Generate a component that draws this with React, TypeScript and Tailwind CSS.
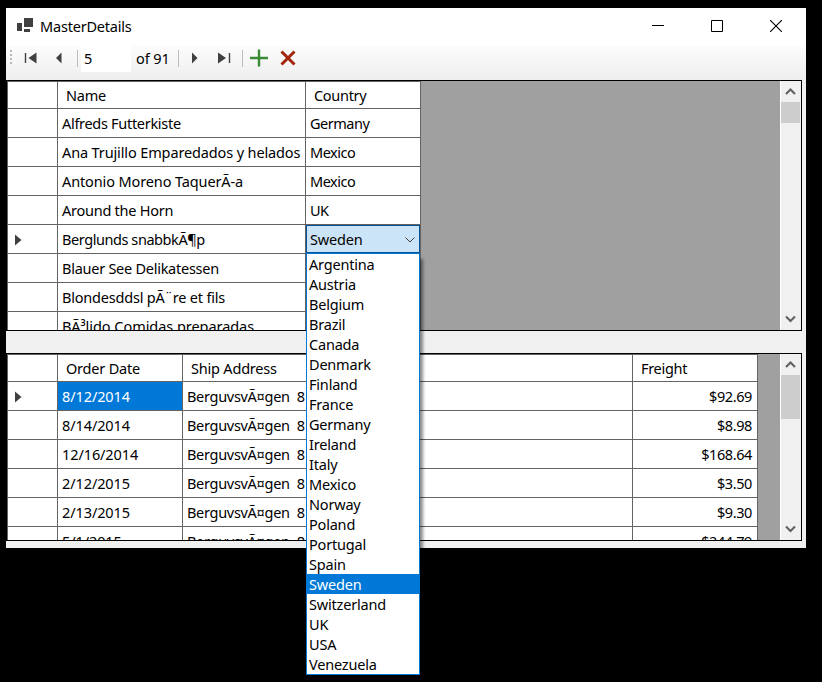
import React from "react";

const customers: [string, string, string][] = [
  ["Alfreds Futterkiste", "Germany", "tracking-[-0.3px]"],
  ["Ana Trujillo Emparedados y helados", "Mexico", "tracking-[-0.13px]"],
  ["Antonio Moreno TaquerÃ-a", "Mexico", "tracking-[-0.12px]"],
  ["Around the Horn", "UK", "tracking-[-0.25px]"],
  ["Berglunds snabbkÃ¶p", "Sweden", "tracking-[-0.43px]"],
  ["Blauer See Delikatessen", "", "tracking-[-0.26px]"],
  ["Blondesddsl pÃ¨re et fils", "", "tracking-[-0.2px]"],
  ["BÃ³lido Comidas preparadas", "", "tracking-[-0.05px]"],
];

const orders: [string, string][] = [
  ["8/12/2014", "$92.69"],
  ["8/14/2014", "$8.98"],
  ["12/16/2014", "$168.64"],
  ["2/12/2015", "$3.50"],
  ["2/13/2015", "$9.30"],
  ["5/1/2015", "$244.79"],
];

const countries = [
  "Argentina", "Austria", "Belgium", "Brazil", "Canada", "Denmark", "Finland",
  "France", "Germany", "Ireland", "Italy", "Mexico", "Norway", "Poland",
  "Portugal", "Spain", "Sweden", "Switzerland", "UK", "USA", "Venezuela",
];

function Chevron({ up = false, className = "" }: { up?: boolean; className?: string }) {
  return (
    <svg width="21" height="20" viewBox="0 0 21 20" className={className}>
      <path d={up ? "M6 13 L10.5 8.5 L15 13" : "M6 6.5 L10.5 11 L15 6.5"} fill="none" stroke="#606060" strokeWidth="2.1" />
    </svg>
  );
}

function ScrollBar({ thumb }: { thumb: string }) {
  return (
    <div className="flex w-[21px] shrink-0 flex-col border-l border-white bg-[#f0f0f0]">
      <Chevron up className="-ml-px shrink-0" />
      <div className={"mt-px w-[19px] shrink-0 bg-[#cdcdcd] " + thumb} />
      <Chevron className="-ml-px mt-auto shrink-0" />
    </div>
  );
}

function RowHead({ current = false }: { current?: boolean }) {
  return (
    <div className="flex w-[50px] shrink-0 items-center border-r border-[#646464] pl-[7px] pt-[2px]">
      {current && (
        <svg width="7" height="12" viewBox="0 0 7 12">
          <path d="M0 0.5 L6.5 6 L0 11.5 Z" fill="#404040" />
        </svg>
      )}
    </div>
  );
}

function Separator() {
  return <div className="h-[17px] w-px bg-[#bdbdbd]" />;
}

function TitleBar() {
  return (
    <div className="flex h-[37px] shrink-0 items-center bg-white pl-[11px]">
      <svg width="17" height="16" viewBox="0 0 17 16" className="mb-[3px]">
        <rect x="7" y="1" width="9" height="9" fill="#404040" />
        <rect x="0" y="6" width="5" height="8" fill="#404040" />
        <rect x="7" y="12" width="6" height="3" fill="#404040" />
      </svg>
      <span className="mb-[2px] ml-[6px] text-[14.5px]">MasterDetails</span>
      <div className="mb-px ml-auto flex items-center gap-[47px] pr-[24px]">
        <svg width="12" height="12" viewBox="0 0 12 12"><path d="M0 5.5 H12" stroke="#000" /></svg>
        <svg width="12" height="12" viewBox="0 0 12 12"><path d="M.5 .5 H11.5 V11.5 H.5 Z" fill="none" stroke="#000" /></svg>
        <svg width="12" height="12" viewBox="0 0 12 12"><path d="M0 0 L12 12 M12 0 L0 12" stroke="#000" strokeWidth="1.1" /></svg>
      </div>
    </div>
  );
}

function ToolBar() {
  return (
    <div className="flex h-[35px] shrink-0 items-start bg-linear-to-b from-[#fdfdfd] to-[#eeeeee]">
      <div className="flex h-[27px] items-center">
        <svg width="6" height="14" viewBox="0 0 6 14" className="mb-[3px] ml-[2px]">
          <path d="M3 0 V14" stroke="#b8b8b8" strokeWidth="2" strokeDasharray="2 2" />
        </svg>
        <svg width="14" height="12" viewBox="0 0 14 12" className="mb-[2px] ml-[10px]">
          <path d="M1.5 1 V11" stroke="#404040" strokeWidth="1.4" />
          <path d="M12.5 .5 L4.5 6 L12.5 11.5 Z" fill="#404040" />
        </svg>
        <svg width="8" height="12" viewBox="0 0 8 12" className="mb-[2px] ml-[17px]">
          <path d="M6.5 .5 L1 6 L6.5 11.5 Z" fill="#404040" />
        </svg>
        <div className="ml-[14px]"><Separator /></div>
        <div className="ml-[3px] flex h-[27px] w-[50px] items-center bg-white pb-[2px] pl-[3px]">5</div>
        <span className="mb-[2px] ml-[5px] w-[37px] tracking-[-0.1px]">of 91</span>
        <div className="ml-[5px]"><Separator /></div>
        <svg width="8" height="12" viewBox="0 0 8 12" className="mb-[2px] ml-[12px]">
          <path d="M1 .5 L6.5 6 L1 11.5 Z" fill="#404040" />
        </svg>
        <svg width="14" height="12" viewBox="0 0 14 12" className="mb-[2px] ml-[19px]">
          <path d="M0 .5 L8 6 L0 11.5 Z" fill="#404040" />
          <path d="M11.5 1 V11" stroke="#404040" strokeWidth="1.4" />
        </svg>
        <div className="ml-[10px]"><Separator /></div>
        <svg width="18" height="18" viewBox="0 0 18 18" className="mb-[2px] ml-[7px]">
          <path d="M9 0.5 V17.5 M0 9 H18" stroke="#388a34" strokeWidth="2.4" />
        </svg>
        <svg width="16" height="16" viewBox="0 0 16 16" className="mb-[2px] ml-[12px]">
          <path d="M1.5 1.5 L14.5 14.5 M14.5 1.5 L1.5 14.5" stroke="#a1260d" strokeWidth="3" />
        </svg>
      </div>
    </div>
  );
}

function CustomerGrid() {
  return (
    <div className="flex h-[251px] w-[796px] shrink-0 overflow-hidden border border-black bg-[#a0a0a0]">
      <div className="h-[400px] w-[414px] shrink-0 border-l border-t border-[#646464] bg-white">
        <div className="flex h-[27px] border-b border-[#646464]">
          <RowHead />
          <div className="flex w-[248px] items-center border-r border-[#646464] pl-[8px]">Name</div>
          <div className="flex w-[115px] items-center border-r border-[#646464] pl-[8px] tracking-[-0.3px]">Country</div>
        </div>
        {customers.map(([name, country, tracking], i) => (
          <div key={name} className="flex h-[29px] border-b border-[#646464]">
            <RowHead current={i === 4} />
            <div className={"flex w-[248px] items-center whitespace-nowrap border-r border-[#646464] pl-[4px] " + tracking}>{name}</div>
            <div className="flex w-[115px] items-center border-r border-[#646464] pl-[4px] tracking-[-0.5px]">{i === 4 ? "" : country}</div>
          </div>
        ))}
      </div>
      <div className="flex-1" />
      <ScrollBar thumb="h-[21px]" />
    </div>
  );
}

function OrderGrid() {
  return (
    <div className="flex h-[188px] w-[796px] shrink-0 overflow-hidden border border-black bg-[#a0a0a0]">
      <div className="h-[300px] w-[751px] shrink-0 border-l border-t border-[#646464] bg-white">
        <div className="flex h-[27px] border-b border-[#646464]">
          <RowHead />
          <div className="flex w-[125px] items-center border-r border-[#646464] pl-[8px]">Order Date</div>
          <div className="flex w-[450px] items-center border-r border-[#646464] pl-[8px]">Ship Address</div>
          <div className="flex w-[125px] items-center border-r border-[#646464] pl-[8px] tracking-[-0.3px]">Freight</div>
        </div>
        {orders.map(([date, freight], i) => (
          <div key={date} className="flex h-[29px] border-b border-[#646464]">
            <RowHead current={i === 0} />
            <div className={"flex w-[125px] items-center border-r border-[#646464] pl-[4px] tracking-[-0.1px] " + (i === 0 ? "bg-[#0078d7] text-white" : "")}>{date}</div>
            <div className="flex w-[450px] items-center whitespace-pre border-r border-[#646464] pl-[4px] tracking-[-0.3px]">{"BerguvsvÃ¤gen  8"}</div>
            <div className="flex w-[125px] items-center justify-end border-r border-[#646464] pr-[5px] tracking-[-0.4px]">{freight}</div>
          </div>
        ))}
      </div>
      <div className="flex-1" />
      <ScrollBar thumb="h-[44px]" />
    </div>
  );
}

function CountryPicker() {
  return (
    <div className="absolute left-[306px] top-[225px] w-[114px]">
      <div className="flex h-[28px] items-center border border-[#005499] bg-[#cce4f7] pl-[3px]">
        <span>Sweden</span>
        <svg width="10" height="6" viewBox="0 0 10 6" className="ml-auto mr-[4px] mt-[2px]">
          <path d="M.5 .5 L5 5 L9.5 .5" fill="none" stroke="#404040" />
        </svg>
      </div>
      <div className="border border-[#0078d7] bg-white shadow-[4px_5px_3px_-1px_rgba(0,0,0,0.45)]">
        {countries.map((country) => (
          <div key={country} className={"flex h-[20px] items-center pl-[2px] " + (country === "Sweden" ? "bg-[#0078d7] text-white" : "")}>
            {country}
          </div>
        ))}
      </div>
    </div>
  );
}

export default function App() {
  return (
    <div className="relative h-[682px] w-[822px] overflow-hidden bg-black pl-[6px] pt-[8px] font-['Noto_Sans',sans-serif] text-[14.5px] leading-[20px] tracking-[-0.2px] text-black">
      <div className="flex h-[540px] w-[800px] flex-col bg-[#f0f0f0]">
        <TitleBar />
        <ToolBar />
        <CustomerGrid />
        <div className="h-[22px] shrink-0" />
        <OrderGrid />
      </div>
      <CountryPicker />
    </div>
  );
}
